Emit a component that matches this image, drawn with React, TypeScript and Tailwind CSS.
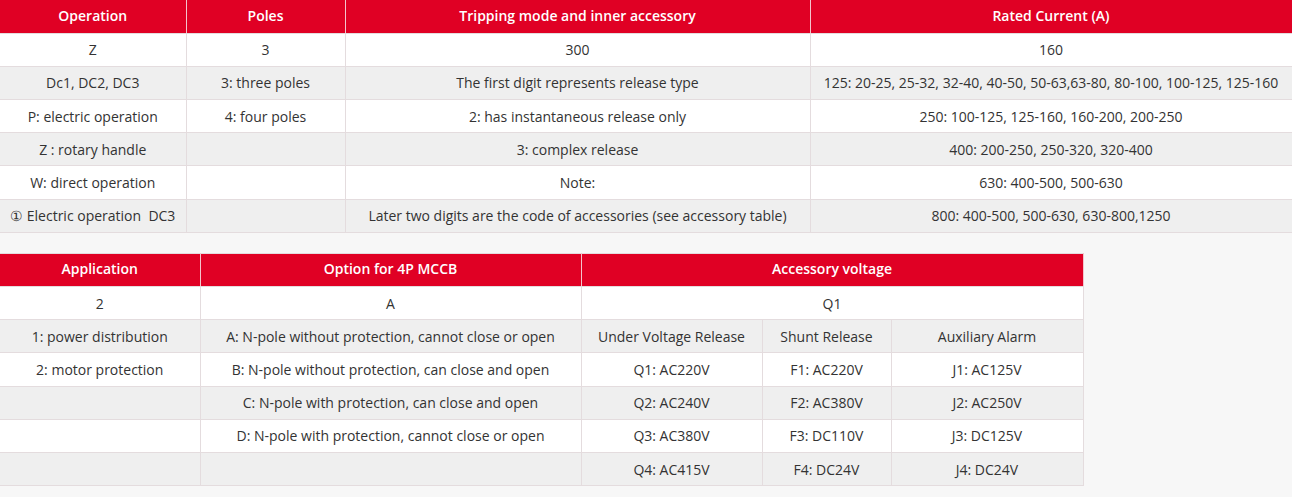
import React from "react";

const topRows = [
  ["Z", "3", "300", "160"],
  ["Dc1, DC2, DC3", "3: three poles", "The first digit represents release type", "125: 20-25, 25-32, 32-40, 40-50, 50-63,63-80, 80-100, 100-125, 125-160"],
  ["P: electric operation", "4: four poles", "2: has instantaneous release only", "250: 100-125, 125-160, 160-200, 200-250"],
  ["Z : rotary handle", "", "3: complex release", "400: 200-250, 250-320, 320-400"],
  ["W: direct operation", "", "Note:", "630: 400-500, 500-630"],
  ["\u2460 Electric operation\u00a0 DC3", "", "Later two digits are the code of accessories (see accessory table)", "800: 400-500, 500-630, 630-800,1250"],
];

const bottomRows = [
  ["1: power distribution", "A: N-pole without protection, cannot close or open", "Under Voltage Release", "Shunt Release", "Auxiliary Alarm"],
  ["2: motor protection", "B: N-pole without protection, can close and open", "Q1: AC220V", "F1: AC220V", "J1: AC125V"],
  ["", "C: N-pole with protection, can close and open", "Q2: AC240V", "F2: AC380V", "J2: AC250V"],
  ["", "D: N-pole with protection, cannot close or open", "Q3: AC380V", "F3: DC110V", "J3: DC125V"],
  ["", "", "Q4: AC415V", "F4: DC24V", "J4: DC24V"],
];

const th = "h-[33.2px] pb-[2px] border border-[#e4dcde] border-t-0 border-l-[#f3c4cb] border-r-[#f3c4cb] first:border-l-0 font-semibold text-white text-[14px] text-center";
const td = "h-[33.2px] border border-[#e4dcde] text-[14px] text-[#333333] text-center px-1 whitespace-nowrap first:border-l-0";

const App = () => {
  return (
    <div
      className="w-[1292px] h-[497px] bg-[#f7f7f7] overflow-hidden"
      style={{ fontFamily: '"Open Sans", "Liberation Sans", sans-serif' }}
    >
      <table className="w-[1292px] table-fixed border-collapse">
        <colgroup>
          <col className="w-[186px]" />
          <col className="w-[159px]" />
          <col className="w-[465px]" />
          <col className="w-[482px]" />
        </colgroup>
        <thead>
          <tr className="bg-[#e00024]">
            <th className={th}>Operation</th>
            <th className={th}>Poles</th>
            <th className={th}>Tripping mode and inner accessory</th>
            <th className={th}>Rated Current (A)</th>
          </tr>
        </thead>
        <tbody>
          {topRows.map((row, i) => (
            <tr key={i} className={i % 2 === 0 ? "bg-white" : "bg-[#efefef]"}>
              {row.map((cell, j) => (
                <td key={j} className={td}>
                  {cell}
                </td>
              ))}
            </tr>
          ))}
        </tbody>
      </table>

      <table className="mt-5 w-[1083px] table-fixed border-collapse border-t border-[#e4dcde]">
        <colgroup>
          <col className="w-[200px]" />
          <col className="w-[381px]" />
          <col className="w-[181px]" />
          <col className="w-[129px]" />
          <col className="w-[192px]" />
        </colgroup>
        <thead>
          <tr className="bg-[#e00024]">
            <th className={th}>Application</th>
            <th className={th}>Option for 4P MCCB</th>
            <th className={th} colSpan={3}>
              Accessory voltage
            </th>
          </tr>
        </thead>
        <tbody>
          <tr className="bg-white">
            <td className={td}>2</td>
            <td className={td}>A</td>
            <td className={td} colSpan={3}>
              Q1
            </td>
          </tr>
          {bottomRows.map((row, i) => (
            <tr key={i} className={i % 2 === 0 ? "bg-[#efefef]" : "bg-white"}>
              {row.map((cell, j) => (
                <td key={j} className={td}>
                  {cell}
                </td>
              ))}
            </tr>
          ))}
        </tbody>
      </table>
    </div>
  );
};

export default App;
